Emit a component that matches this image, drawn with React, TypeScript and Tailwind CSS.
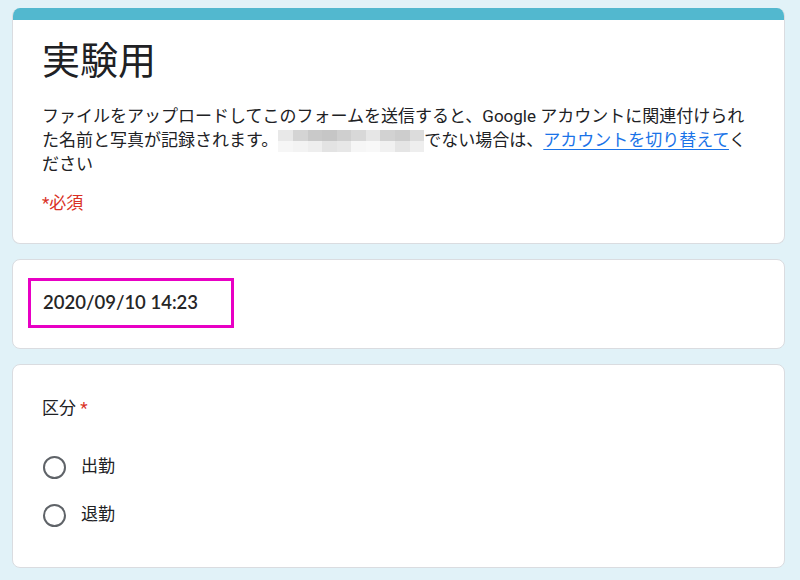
const top = ["#e8e8e8", "#d4d4d4", "#c9c9c9", "#c6c6c6", "#cfcfcf", "#d8d8d8", "#e6e6e6", "#d2d2d2", "#cdcdcd", "#dcdcdc"];
const bottom = ["#f6f6f6", "#f3f3f3", "#eeeeee", "#e3e3e3", "#e7e7e7", "#f6f6f6", "#f8f8f8", "#f1f1f1", "#e5e5e5", "#eeeeee"];

// pixelated redaction over an e-mail address
const Redacted = () => (
  <span className="relative inline-block h-[14px] w-[146px]">
    <span className="absolute left-0 top-[-2px] flex flex-col">
      <span className="flex">
        {top.map((c, i) => (
          <span key={i} className="block h-[11px] w-[14.6px]" style={{ backgroundColor: c }} />
        ))}
      </span>
      <span className="flex">
        {bottom.map((c, i) => (
          <span key={i} className="block h-[11px] w-[14.6px]" style={{ backgroundColor: c }} />
        ))}
      </span>
    </span>
  </span>
);

const Radio = ({ label }: { label: string }) => (
  <div className="flex h-[48px] items-center gap-[15px]">
    <span className="ml-[1px] block h-[23px] w-[23px] rounded-full border-[2.5px] border-[#5f6368]" />
    <span className="text-[17px] text-[#202124]">{label}</span>
  </div>
);

export default function App() {
  return (
    <div
      className="min-h-[580px] w-[800px] bg-[#e1f2f8] pt-[8px] pl-[12px] pr-[15px] text-[#202124]"
      style={{ fontFamily: 'Roboto, "Noto Sans CJK JP", sans-serif' }}
    >
      <div className="flex flex-col gap-[15px]">
        <div className="overflow-hidden rounded-[8px] border border-[#dadce0] border-t-0 bg-white">
          <div className="h-[12px] bg-[#52b8cf]" />
          <div className="px-[29px] pt-[17px] pb-[28px]">
            <h1 className="text-[38px] leading-[48px]">実験用</h1>
            <p className="mt-[19px] text-[17px] leading-[24px]">
              ファイルをアップロードしてこのフォームを送信すると、Google アカウントに関連付けられた名前と写真が記録されます。
              <Redacted />
              でない場合は、
              <a className="text-[#1a73e8] underline underline-offset-[3px]">アカウントを切り替えて</a>
              ください
            </p>
            <div className="mt-[15px] text-[17px] leading-[24px] text-[#d93025]">*必須</div>
          </div>
        </div>

        <div className="rounded-[8px] border border-[#dadce0] bg-white pt-[18px] pb-[20px] pl-[15px]">
          <div className="flex h-[50px] w-[206px] items-center border-[3px] border-[#e800c4] pl-[12px]">
            <span
              className="text-[18.5px] font-semibold text-[#262626]"
              style={{ fontFamily: 'Lato, "Open Sans", sans-serif' }}
            >
              2020/09/10 14:23
            </span>
          </div>
        </div>

        <div className="rounded-[8px] border border-[#dadce0] bg-white px-[29px] pt-[31px] pb-[28px]">
          <div className="text-[17px] leading-[24px]">
            区分 <span className="text-[#d93025]">*</span>
          </div>
          <div className="mt-[23px] flex flex-col">
            <Radio label="出勤" />
            <Radio label="退勤" />
          </div>
        </div>
      </div>
    </div>
  );
}
